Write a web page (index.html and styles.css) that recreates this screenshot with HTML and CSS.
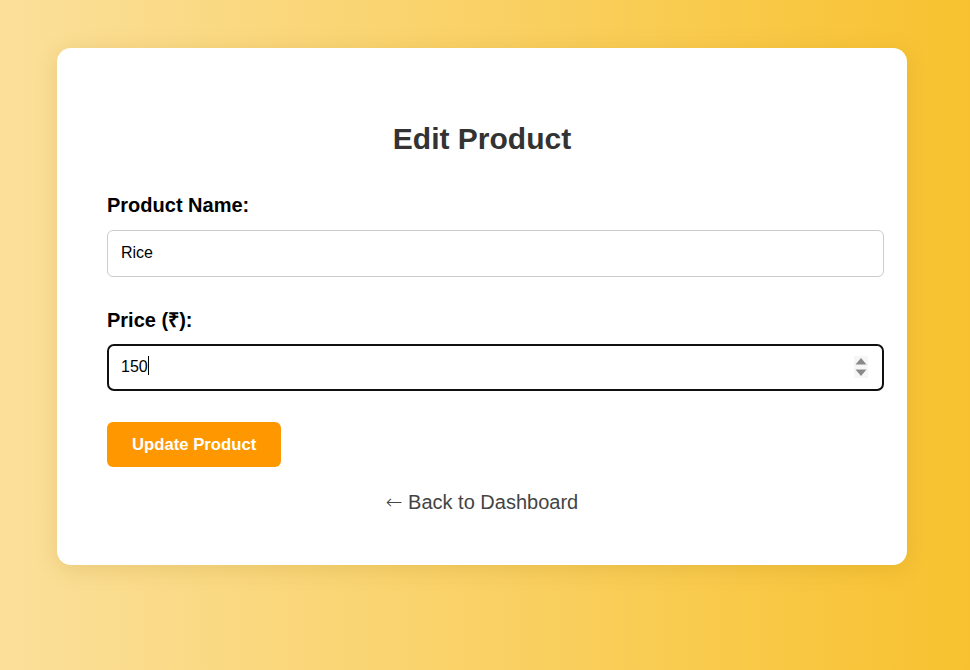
FILE: index.html
```html
<!DOCTYPE html>
<html lang="en">
<head>
<meta charset="utf-8">
<title>Edit Product</title>
<link rel="stylesheet" href="styles.css">
</head>
<body>
  <div class="card">
    <h2 class="title">Edit Product</h2>
    <form class="form">
      <label class="label" for="name">Product Name:</label>
      <input class="field" id="name" type="text" value="Rice">
      <label class="label label-gap" for="price">Price (₹):</label>
      <div class="field-wrap">
        <input class="field field-focused" id="price" type="text" value="150">
        <span class="caret"></span>
        <svg class="spinner" width="14" height="22" viewBox="0 0 14 22">
          <rect x="0" y="0" width="14" height="22" fill="#f6f6f6"/>
          <path d="M7 2 L12.5 8.5 L1.5 8.5 Z" fill="#8a8a8a"/>
          <path d="M1.5 13.5 L12.5 13.5 L7 20 Z" fill="#8a8a8a"/>
        </svg>
      </div>
      <button class="btn" type="button">Update Product</button>
    </form>
    <a class="back" href="#"><span class="arrow">←</span> Back to Dashboard</a>
  </div>
</body>
</html>
```
FILE: styles.css
```css
html, body {
  margin: 0;
  height: 100%;
}
body {
  font-family: "Liberation Sans", Arial, sans-serif;
  background: linear-gradient(to right, #fbe09b, #f8c22f);
  padding: 48px 0 0 57px;
  box-sizing: border-box;
}
.card {
  width: 750px;
  padding: 50px 50px 51px;
  background: #fff;
  border-radius: 14px;
  box-shadow: 0 4px 22px rgba(150, 110, 0, 0.18);
  display: flex;
  flex-direction: column;
}
.title {
  margin: 23px 0 0;
  font-size: 30px;
  line-height: 36px;
  font-weight: bold;
  color: #333;
  text-align: center;
}
.form {
  display: flex;
  flex-direction: column;
  align-items: flex-start;
  margin-top: 36px;
}
.label {
  display: block;
  font-size: 20px;
  line-height: 24px;
  font-weight: bold;
  color: #000;
  margin-bottom: 13px;
}
.label-gap {
  margin-top: 31px;
  margin-bottom: 12px;
}
.field {
  width: 750px;
  padding: 13px 12px 15px 13px;
  font-family: "Liberation Sans", Arial, sans-serif;
  font-size: 16px;
  line-height: 17px;
  border: 1px solid #cccccc;
  border-radius: 6px;
  color: #000;
  outline: none;
  background: #fff;
}
.field-wrap {
  position: relative;
}
.field-focused {
  border: 2px solid #101010;
  padding: 12px 11px 14px 12px;
  border-radius: 7px;
}
.caret {
  position: absolute;
  left: 41px;
  top: 12px;
  width: 1px;
  height: 19px;
  background: #000;
}
.spinner {
  position: absolute;
  left: 747px;
  top: 12px;
}
.btn {
  margin-top: 31px;
  background: #ff9800;
  color: #fff;
  border: none;
  border-radius: 6px;
  padding: 0 25px;
  height: 45px;
  font-family: "Liberation Sans", Arial, sans-serif;
  font-size: 16.7px;
  font-weight: bold;
}
.back {
  margin-top: 23px;
  text-align: center;
  font-size: 20px;
  line-height: 24px;
  color: #444;
  text-decoration: none;
}
.arrow {
  font-family: "DejaVu Sans", sans-serif;
  font-weight: 300;
}
```
